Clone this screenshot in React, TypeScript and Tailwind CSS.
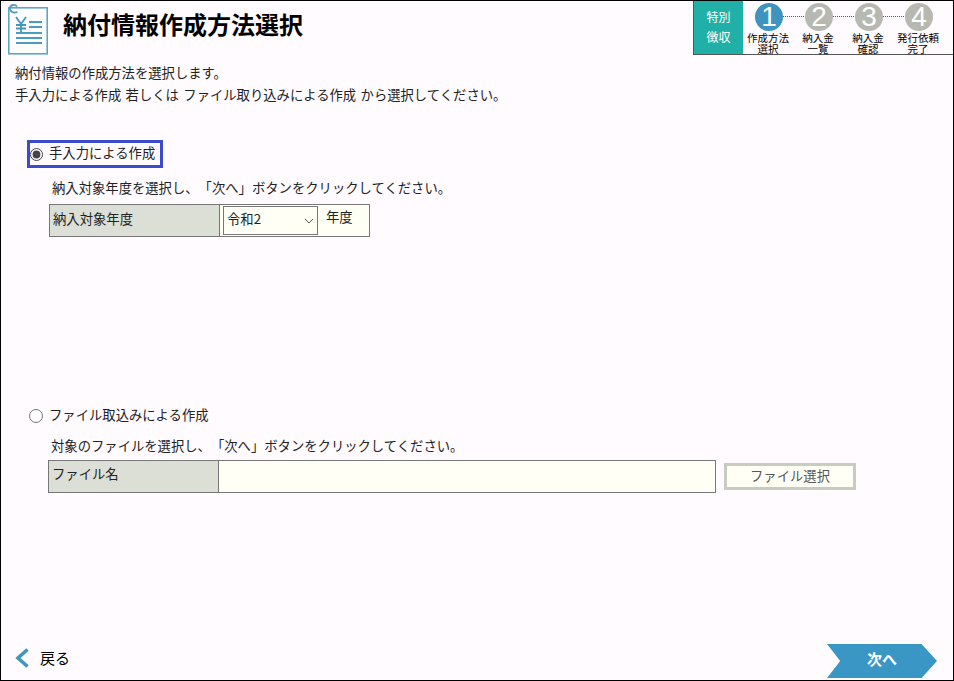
const font = "[font-family:'Noto_Sans_CJK_JP','Liberation_Sans',sans-serif]"

const steps = [
  { n: '1', label: ['作成方法', '選択'], active: true },
  { n: '2', label: ['納入金', '一覧'], active: false },
  { n: '3', label: ['納入金', '確認'], active: false },
  { n: '4', label: ['発行依頼', '完了'], active: false },
]

function DocIcon() {
  return (
    <svg width="40" height="51" viewBox="0 0 40 51" fill="none" className="shrink-0">
      <rect x="0.8" y="3.8" width="38.4" height="46" fill="#fdfdff" stroke="#5fa6c6" strokeWidth="1.6" />
      <path d="M9 2.5C7 0 2.5 0.5 2 4C1.6 7.5 5 9.5 9.5 8" stroke="#4a9cc0" strokeWidth="1.8" />
      <path d="M8 13l5 7l5-7M13 20v8M8 21h10M8 24.5h10" stroke="#3f97bf" strokeWidth="1.8" />
      <path d="M21 18h13M21 23h13M8 29h26M8 34h26M8 39h26" stroke="#4a9cc0" strokeWidth="2" />
    </svg>
  )
}

function Stepper() {
  return (
    <div className="flex h-[54px] w-[260px] shrink-0 border-b border-l border-[#555]">
      <div className="flex w-[49px] flex-col items-center justify-center bg-[#20b0a8] pb-[2px] text-[12px] leading-[20px] text-white">
        <span>特別</span>
        <span>徴収</span>
      </div>
      <div className="relative flex flex-1 pl-[1px]">
        <div className="absolute left-[26px] right-[35px] top-[15px] border-t border-dotted border-[#555]" />
        {steps.map((s) => (
          <div key={s.n} className="relative flex w-[50px] flex-col items-center">
            <div
              className={`mt-[2px] flex size-[28px] items-center justify-center rounded-full font-['Liberation_Sans'] text-[28px] leading-[28px] text-white ${
                s.active ? 'bg-[#3f94bf]' : 'bg-[#b7b9b0]'
              }`}
            >
              {s.n}
            </div>
            <div className="mr-[2px] mt-[1px] whitespace-nowrap text-center text-[10.5px] leading-[11px] text-black">
              {s.label.map((l) => (
                <div key={l}>{l}</div>
              ))}
            </div>
          </div>
        ))}
      </div>
    </div>
  )
}

export default function App() {
  return (
    <div className={`${font} flex h-[681px] w-[954px] flex-col border border-black bg-[#fffbff] text-[13.33px] text-[#222] [text-spacing-trim:space-all]`}>
      <header className="flex h-[54px] items-start justify-between">
        <div className="flex items-center pl-[7px] pt-[3px]">
          <DocIcon />
          <h1 className="ml-[15px] -mt-[11px] text-[24px] leading-[36px] font-bold text-black">納付情報作成方法選択</h1>
        </div>
        <Stepper />
      </header>

      <div className="mt-[7px] pl-[14px] leading-[22px]">
        <p>納付情報の作成方法を選択します。</p>
        <p className="[word-spacing:1.4px]">手入力による作成 若しくは ファイル取り込みによる作成 から選択してください。</p>
      </div>

      <section className="mt-[34px] pl-[26px]">
        <label className="flex h-[28px] w-[136px] items-center border-[3px] border-[#3a4bd0]">
          <input type="radio" name="method" defaultChecked className="m-0 size-[13px] accent-[#444]" />
          <span className="ml-[6px] -mt-[3px] leading-none">手入力による作成</span>
        </label>
        <p className="ml-[25px] mt-[10px] leading-[20px]">納入対象年度を選択し、「次へ」ボタンをクリックしてください。</p>
        <div className="ml-[22px] mt-[6px] flex h-[33px] w-[321px] border border-[#777] bg-[#fffff6]">
          <div className="w-[170px] border-r border-[#777] bg-[#dcdfd6] pl-[3px] pt-[4px] leading-[20px]">納入対象年度</div>
          <div className="flex items-center pl-[3px]">
            <div className="relative h-[29px] w-[95px]">
              <select className="h-full w-full appearance-none border border-[#777] bg-[#fffff6] pb-[3px] pl-[3px] text-[13.33px] outline-none">
                <option>令和2</option>
              </select>
              <svg width="10" height="6" viewBox="0 0 10 6" fill="none" className="absolute right-[4px] top-[12px]">
                <path d="M1 1l4 4l4-4" stroke="#555" />
              </svg>
            </div>
            <span className="ml-[8px] -mt-[7px]">年度</span>
          </div>
        </div>
      </section>

      <section className="mt-[169px] pl-[28px]">
        <label className="flex h-[20px] items-center">
          <input type="radio" name="method" className="m-0 size-[14px] accent-[#444]" />
          <span className="ml-[6px] -mt-[2px] leading-none">ファイル取込みによる作成</span>
        </label>
        <p className="ml-[22px] mt-[10px] leading-[20px]">対象のファイルを選択し、「次へ」ボタンをクリックしてください。</p>
        <div className="ml-[19px] mt-[4px] flex items-center">
          <div className="flex h-[33px] w-[668px] border border-[#777] bg-[#fffff6]">
            <div className="w-[170px] border-r border-[#777] bg-[#dcdfd6] pl-[3px] pt-[3px] leading-[20px]">ファイル名</div>
          </div>
          <button className="ml-[8px] h-[27px] w-[132px] border-[3px] border-[#c8ccbf] bg-[#fffff6] pb-[1px] text-[13.33px] leading-none text-[#555]">
            ファイル選択
          </button>
        </div>
      </section>

      <footer className="mt-auto flex items-end justify-between pb-[2px] pl-[14px] pr-[16px]">
        <button className="mb-[9px] flex items-center text-[15px] text-black">
          <svg width="15" height="20" viewBox="0 0 15 20" fill="none">
            <path d="M12.5 1.5L3 10l9.5 8.5" stroke="#3f97bf" strokeWidth="3.6" />
          </svg>
          <span className="ml-[10px]">戻る</span>
        </button>
        <button className="h-[34px] w-[110px] bg-[#3a97c5] pb-[3px] text-[15px] font-bold text-white [clip-path:polygon(0_0,86%_0,100%_50%,86%_100%,0_100%,12%_50%)]">
          次へ
        </button>
      </footer>
    </div>
  )
}
